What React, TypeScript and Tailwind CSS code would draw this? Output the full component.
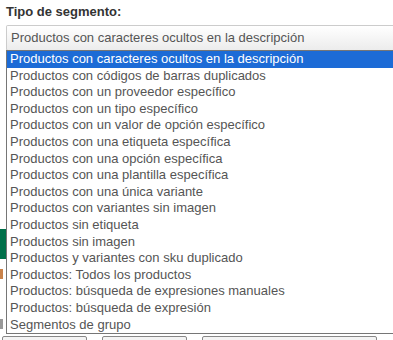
import React from "react";

const options = [
  "Productos con caracteres ocultos en la descripción",
  "Productos con códigos de barras duplicados",
  "Productos con un proveedor específico",
  "Productos con un tipo específico",
  "Productos con un valor de opción específico",
  "Productos con una etiqueta específica",
  "Productos con una opción específica",
  "Productos con una plantilla específica",
  "Productos con una única variante",
  "Productos con variantes sin imagen",
  "Productos sin etiqueta",
  "Productos sin imagen",
  "Productos y variantes con sku duplicado",
  "Productos: Todos los productos",
  "Productos: búsqueda de expresiones manuales",
  "Productos: búsqueda de expresión",
  "Segmentos de grupo",
];

export default function App() {
  return (
    <div
      className="relative w-[393px] h-[340px] overflow-hidden bg-white flex flex-col"
      style={{ fontFamily: '"Liberation Sans", Arial, sans-serif' }}
    >
      <div className="pl-[6px] pt-[4px] flex flex-col gap-[5px]">
        <div className="text-[13px] font-bold text-[#333] leading-[16px]">Tipo de segmento:</div>
        <div className="h-[26px] w-[400px] border border-[#ccc] border-b-[#aaa] rounded-[2px] bg-gradient-to-b from-white to-[#ececec] pl-[4px] text-[13px] leading-[24px] text-[#555]">
          Productos con caracteres ocultos en la descripción
        </div>
      </div>

      {/* underlying page content, mostly hidden by the open list */}
      <div className="flex flex-col mt-[178px] gap-[10px]">
        <div className="w-[40px] h-[30px] bg-[#00704a]" />
        <div className="w-[3px] h-[10px] bg-[#c9824a]" />
        <div className="w-[3px] h-[10px] mt-[30px] bg-[#999]" />
      </div>
      <div className="flex mt-auto pl-[2px] gap-[15px] h-[4px]">
        <div className="w-[85px] h-[10px] border border-[#888] rounded-[2px] bg-[#f4f4f4]" />
        <div className="w-[85px] h-[10px] border border-[#888] rounded-[2px] bg-[#f4f4f4]" />
        <div className="w-[175px] h-[10px] border border-[#888] rounded-[2px] bg-[#f4f4f4]" />
      </div>

      {/* open dropdown list */}
      <div className="absolute left-[6px] top-[50px] w-[400px] border border-[#767676] bg-white flex flex-col">
        {options.map((o, i) => (
          <div
            key={o}
            className={
              "h-[16.6px] pl-[3px] text-[13px] leading-[16.6px] whitespace-nowrap " +
              (i === 0 ? "bg-[#1c6bd6] text-white" : "text-[#555]")
            }
          >
            {o}
          </div>
        ))}
      </div>
    </div>
  );
}
